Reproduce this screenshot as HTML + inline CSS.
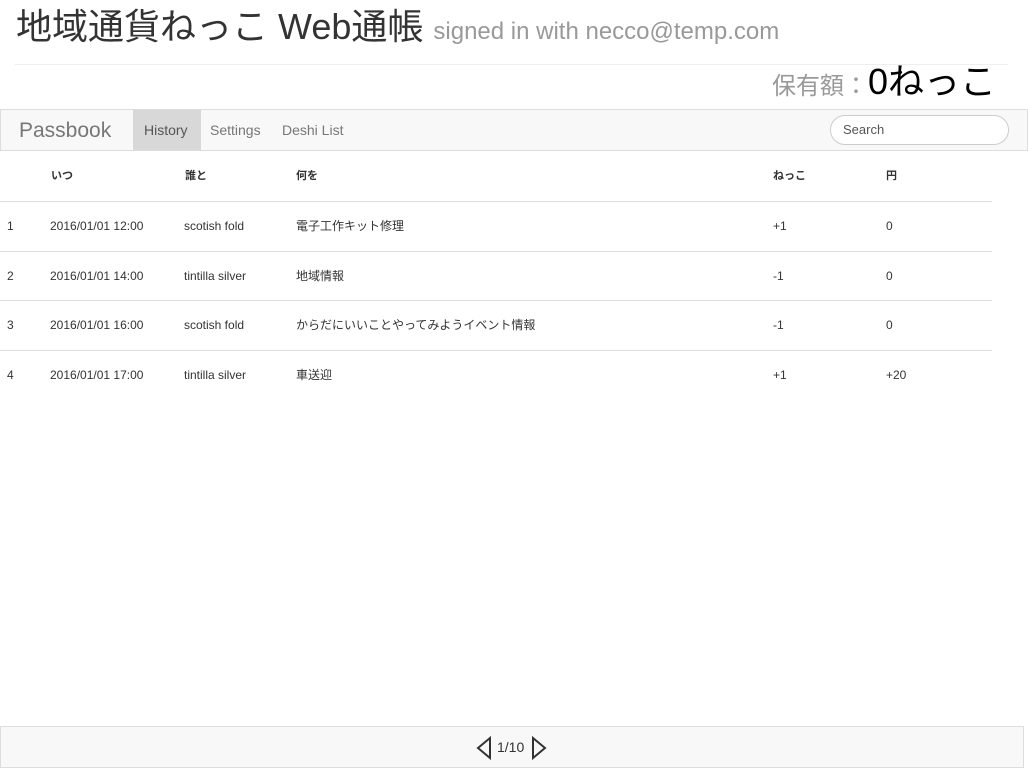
<!DOCTYPE html>
<html><head><meta charset="utf-8"><style>
*{margin:0;padding:0;box-sizing:border-box}
body{width:1028px;height:768px;position:relative;background:#fff;font-family:"Liberation Sans","Noto Sans CJK JP",sans-serif;color:#333;overflow:hidden}
.a{position:absolute;white-space:nowrap}
h1{position:absolute;left:16px;top:6px;font-size:36px;font-weight:normal;color:#333;white-space:nowrap;line-height:42px}
h1 small{font-size:24px;color:#999}
.hr{position:absolute;left:15px;top:64px;width:993px;height:1px;background:#eee}
.nav{position:absolute;left:0;top:109px;width:1028px;height:42px;background:#f8f8f8;border:1px solid #ddd}
.tbl div{position:absolute;font-size:12px;color:#333;line-height:14px;height:14px}
.th{font-weight:bold;font-size:11px!important}
.line{position:absolute;left:0;width:992px;height:1px!important;background:#ddd}
</style></head><body>
<h1>地域通貨ねっこ Web通帳 <small>signed in with necco@temp.com</small></h1>
<div class="hr"></div>
<div class="a" style="right:32px;top:60px;line-height:44px"><span style="font-size:24px;color:#999">保有額：</span><span style="font-size:36px;color:#000">0ねっこ</span></div>
<div class="nav">
<div class="a" style="left:18px;top:9px;font-size:21px;color:#777">Passbook</div>
<div class="a" style="left:132px;top:0;width:68px;height:40px;background:#d8d8d8"></div>
<div class="a" style="left:143px;top:12px;font-size:14px;color:#555">History</div>
<div class="a" style="left:209px;top:12px;font-size:14px;color:#777">Settings</div>
<div class="a" style="left:281px;top:12px;font-size:14px;color:#777">Deshi List</div>
<div class="a" style="left:829px;top:5px;width:179px;height:30px;border:1px solid #ccc;border-radius:15px;background:#fff;font-size:13px;color:#555;padding:6px 12px">Search</div>
</div>
<div class="tbl">
<div class="th" style="left:51px;top:169px">いつ</div>
<div class="th" style="left:185px;top:169px">誰と</div>
<div class="th" style="left:296px;top:169px">何を</div>
<div class="th" style="left:773px;top:169px">ねっこ</div>
<div class="th" style="left:886px;top:169px">円</div>
<div class="line" style="top:201px"></div>
<div style="left:7px;top:219px">1</div><div style="left:50px;top:219px">2016/01/01 12:00</div><div style="left:184px;top:219px">scotish fold</div><div style="left:296px;top:219px">電子工作キット修理</div><div style="left:773px;top:219px">+1</div><div style="left:886px;top:219px">0</div>
<div class="line" style="top:251px"></div>
<div style="left:7px;top:269px">2</div><div style="left:50px;top:269px">2016/01/01 14:00</div><div style="left:184px;top:269px">tintilla silver</div><div style="left:296px;top:269px">地域情報</div><div style="left:773px;top:269px">-1</div><div style="left:886px;top:269px">0</div>
<div class="line" style="top:300px"></div>
<div style="left:7px;top:318px">3</div><div style="left:50px;top:318px">2016/01/01 16:00</div><div style="left:184px;top:318px">scotish fold</div><div style="left:296px;top:318px">からだにいいことやってみようイベント情報</div><div style="left:773px;top:318px">-1</div><div style="left:886px;top:318px">0</div>
<div class="line" style="top:350px"></div>
<div style="left:7px;top:368px">4</div><div style="left:50px;top:368px">2016/01/01 17:00</div><div style="left:184px;top:368px">tintilla silver</div><div style="left:296px;top:368px">車送迎</div><div style="left:773px;top:368px">+1</div><div style="left:886px;top:368px">+20</div>
</div>
<div class="a" style="left:0;top:726px;width:1024px;height:42px;background:#f8f8f8;border:1px solid #ddd"></div>
<svg class="a" style="left:475px;top:736px" width="18" height="24"><path d="M15 2 L3 12 L15 22 Z" fill="none" stroke="#333" stroke-width="2"/></svg>
<div class="a" style="left:497px;top:739px;font-size:14px;color:#333">1/10</div>
<svg class="a" style="left:530px;top:736px" width="18" height="24"><path d="M3 2 L15 12 L3 22 Z" fill="none" stroke="#333" stroke-width="2"/></svg>
</body></html>
